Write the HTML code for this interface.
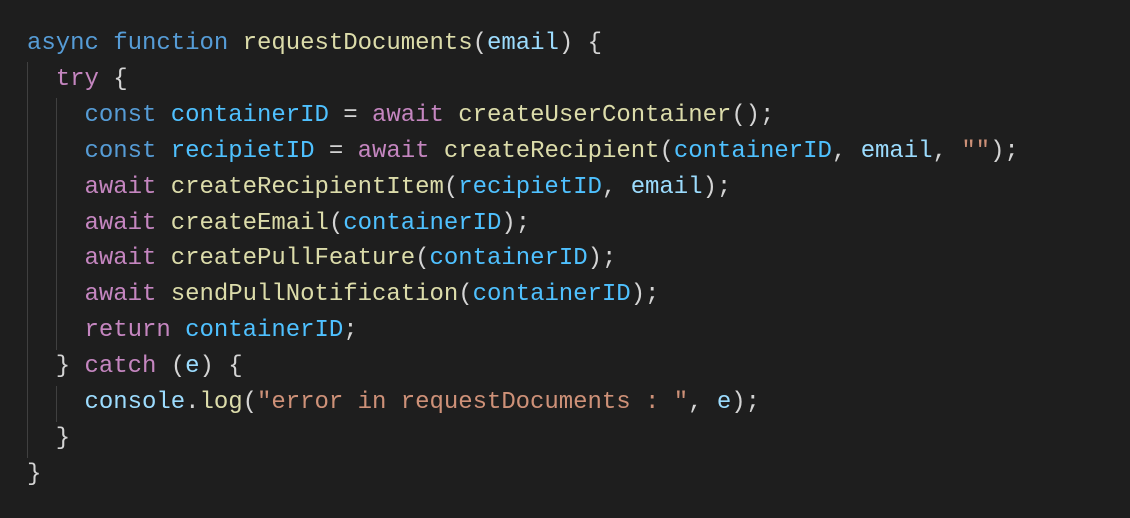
<!DOCTYPE html>
<html><head><style>
html,body{margin:0;padding:0;background:#1e1e1e;width:1130px;height:518px;overflow:hidden}
pre{position:absolute;left:27px;top:26px;margin:0;font-family:"Liberation Mono",monospace;font-size:24px;line-height:35.9px;color:#d4d4d4;letter-spacing:-0.03px}
.k{color:#569cd6}.c{color:#c586c0}.f{color:#dcdcaa}.v{color:#9cdcfe}.n{color:#4fc1ff}.s{color:#ce9178}
.g{position:absolute;width:1px;background:#404040}
</style></head><body>
<div class="g" style="left:27px;top:62px;height:396px"></div>
<div class="g" style="left:56px;top:98px;height:252px"></div>
<div class="g" style="left:56px;top:386px;height:36px"></div>
<pre><span class="k">async</span> <span class="k">function</span> <span class="f">requestDocuments</span>(<span class="v">email</span>) {
  <span class="c">try</span> {
    <span class="k">const</span> <span class="n">containerID</span> = <span class="c">await</span> <span class="f">createUserContainer</span>();
    <span class="k">const</span> <span class="n">recipietID</span> = <span class="c">await</span> <span class="f">createRecipient</span>(<span class="n">containerID</span>, <span class="v">email</span>, <span class="s">""</span>);
    <span class="c">await</span> <span class="f">createRecipientItem</span>(<span class="n">recipietID</span>, <span class="v">email</span>);
    <span class="c">await</span> <span class="f">createEmail</span>(<span class="n">containerID</span>);
    <span class="c">await</span> <span class="f">createPullFeature</span>(<span class="n">containerID</span>);
    <span class="c">await</span> <span class="f">sendPullNotification</span>(<span class="n">containerID</span>);
    <span class="c">return</span> <span class="n">containerID</span>;
  } <span class="c">catch</span> (<span class="v">e</span>) {
    <span class="v">console</span>.<span class="f">log</span>(<span class="s">"error in requestDocuments : "</span>, <span class="v">e</span>);
  }
}</pre>
</body></html>
